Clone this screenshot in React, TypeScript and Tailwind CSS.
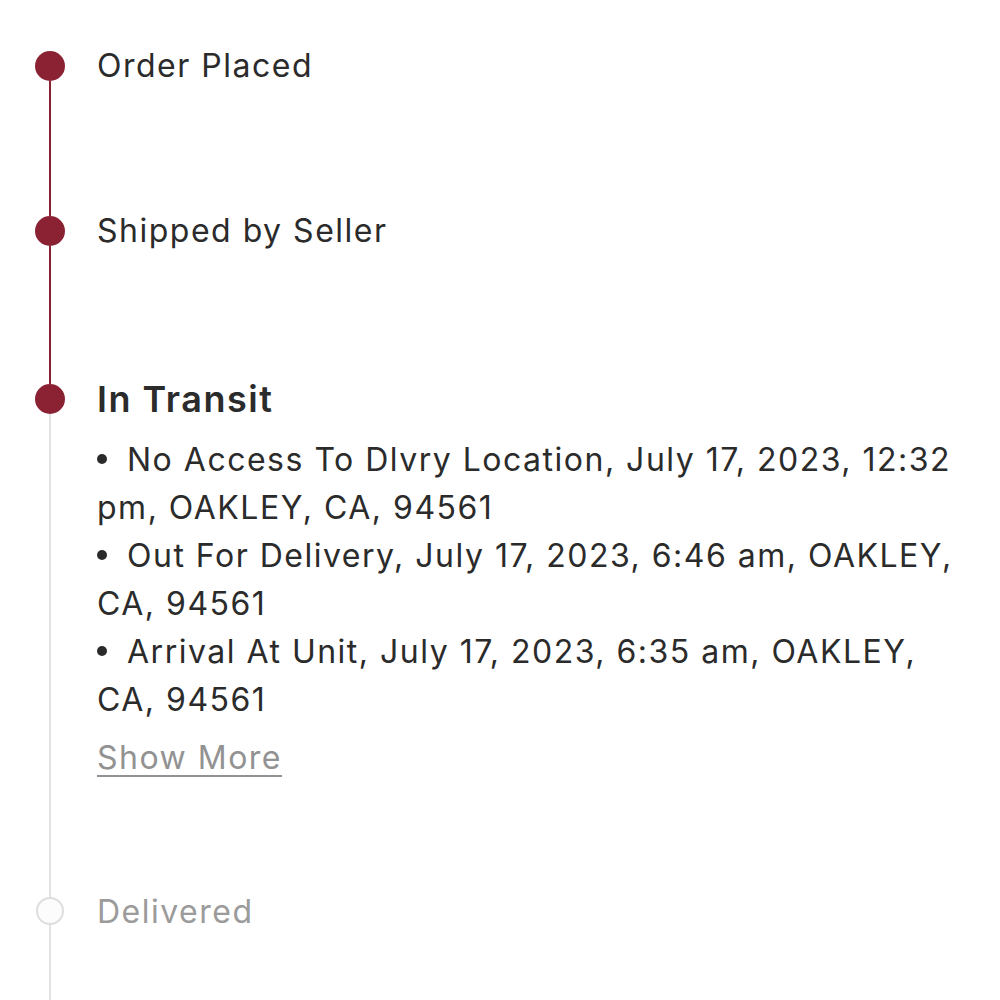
type Step = {
  title: string;
  done: boolean;
  incoming: string | null;
  outgoing: string;
  current?: boolean;
  events?: string[];
};

const MAROON = "bg-[#8a2234]";
const GREY = "bg-[#e2e2e2]";

const STEPS: Step[] = [
  { title: "Order Placed", done: true, incoming: null, outgoing: MAROON },
  { title: "Shipped by Seller", done: true, incoming: MAROON, outgoing: MAROON },
  {
    title: "In Transit",
    done: true,
    current: true,
    incoming: MAROON,
    outgoing: GREY,
    events: [
      "No Access To Dlvry Location, July 17, 2023, 12:32 pm, OAKLEY, CA, 94561",
      "Out For Delivery, July 17, 2023, 6:46 am, OAKLEY, CA, 94561",
      "Arrival At Unit, July 17, 2023, 6:35 am, OAKLEY, CA, 94561",
    ],
  },
  { title: "Delivered", done: false, incoming: GREY, outgoing: GREY },
];

function Dot({ done }: { done: boolean }) {
  if (done) {
    return <div className="ml-[35px] h-[30px] w-[30px] shrink-0 rounded-full bg-[#8a2234]" />;
  }
  return (
    <div className="ml-[36px] h-[28px] w-[28px] shrink-0 rounded-full border-2 border-[#dedede] bg-[#fcfcfc]" />
  );
}

function TimelineStep({ step, last }: { step: Step; last: boolean }) {
  return (
    <div className={`flex ${last ? "min-h-[154px]" : ""}`}>
      <div className="flex w-[97px] shrink-0 flex-col">
        <div className={`ml-[49px] w-[2px] shrink-0 ${step.current ? "h-[54px]" : "h-[51px]"} ${step.incoming ?? ""}`} />
        <Dot done={step.done} />
        <div className={`ml-[49px] w-[2px] flex-1 ${step.outgoing}`} />
      </div>
      <div className={`flex-1 pr-[40px] tracking-[1.5px] ${step.current ? "pt-[47px] pb-[68px]" : "pt-[46px] pb-[79px]"}`}>
        <div
          className={
            step.current
              ? "text-[36px] leading-[44px] font-semibold text-[#2b2b2b]"
              : `text-[32px] leading-[40px] ${step.done ? "text-[#2b2b2b]" : "text-[#9b9b9b]"}`
          }
        >
          {step.title}
        </div>
        {step.events && (
          <>
            <ul className="mt-[15px] text-[32px] leading-[48px] text-[#2b2b2b]">
              {step.events.map((e) => (
                <li key={e}>
                  <span className="mb-[6px] mr-[20px] inline-block h-[10px] w-[10px] rounded-full bg-[#2b2b2b] align-middle" />
                  {e}
                </li>
              ))}
            </ul>
            <button className="mt-[14px] block text-[32px] leading-[40px] tracking-[1.5px] text-[#929292] underline decoration-2 underline-offset-[6px]">
              Show More
            </button>
          </>
        )}
      </div>
    </div>
  );
}

export default function App() {
  return (
    <div className="min-h-[1000px] w-[1000px] bg-white font-['Inter','Open_Sans',sans-serif]">
      {STEPS.map((s, i) => (
        <TimelineStep key={s.title} step={s} last={i === STEPS.length - 1} />
      ))}
    </div>
  );
}
